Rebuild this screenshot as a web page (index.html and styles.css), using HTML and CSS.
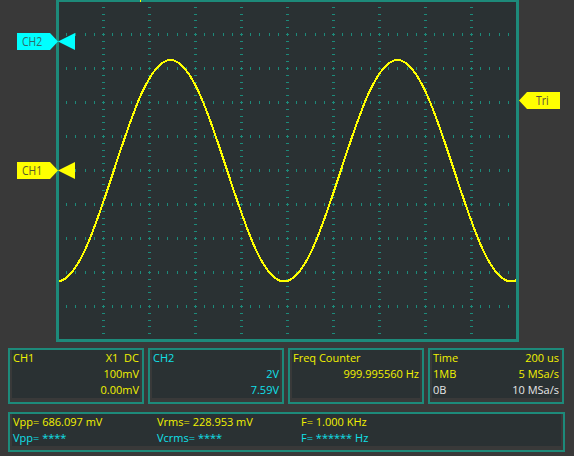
FILE: index.html
```html
<!DOCTYPE html>
<html>
<head>
<meta charset="utf-8">
<link rel="stylesheet" href="styles.css">
</head>
<body>
<div class="scope">
  <div class="frame">
    <svg class="grid" width="457" height="337" viewBox="0 0 457 337">
      <g class="vt">
        <line x1="44.5" y1="-2" x2="44.5" y2="340"/>
        <line x1="90.5" y1="-2" x2="90.5" y2="340"/>
        <line x1="136.5" y1="-2" x2="136.5" y2="340"/>
        <line x1="182.5" y1="-2" x2="182.5" y2="340"/>
        <line x1="228.5" y1="-2" x2="228.5" y2="340"/>
        <line x1="274.5" y1="-2" x2="274.5" y2="340"/>
        <line x1="320.5" y1="-2" x2="320.5" y2="340"/>
        <line x1="366.5" y1="-2" x2="366.5" y2="340"/>
        <line x1="412.5" y1="-2" x2="412.5" y2="340"/>
      </g>
      <g class="ht">
        <line x1="-2" y1="32.5" x2="460" y2="32.5"/>
        <line x1="-2" y1="66.5" x2="460" y2="66.5"/>
        <line x1="-2" y1="100.5" x2="460" y2="100.5"/>
        <line x1="-2" y1="134.5" x2="460" y2="134.5"/>
        <line x1="-2" y1="168.5" x2="460" y2="168.5"/>
        <line x1="-2" y1="202.5" x2="460" y2="202.5"/>
        <line x1="-2" y1="236.5" x2="460" y2="236.5"/>
        <line x1="-2" y1="270.5" x2="460" y2="270.5"/>
        <line x1="-2" y1="304.5" x2="460" y2="304.5"/>
      </g>
      <path class="wave" d="M -2 279.5 C 18.615 279.5, 36.242 225.486, 54.75 168.75 C 73.258 112.014, 90.885 58, 111.5 58 C 132.115 58, 149.742 112.014, 168.25 168.75 C 186.758 225.486, 204.385 279.5, 225 279.5 C 245.615 279.5, 263.242 225.486, 281.75 168.75 C 300.258 112.014, 317.885 58, 338.5 58 C 359.115 58, 376.742 112.014, 395.25 168.75 C 413.758 225.486, 431.385 279.5, 452 279.5 C 472.615 279.5, 490.242 225.486, 508.75 168.75"/>
    </svg>
  </div>
  <div class="trig-pos"></div>
  <div class="marker m-ch2"><span class="tag"><span class="txt">CH2</span></span><span class="arrow"></span></div>
  <div class="marker m-ch1"><span class="tag"><span class="txt">CH1</span></span><span class="arrow"></span></div>
  <div class="marker m-tri"><span class="tag"><span class="txt">Tri</span></span></div>
</div>

<div class="panels">
  <div class="panel">
    <div class="inner">
      <div class="lines y">
        <div class="line"><span>CH1</span><span class="pre">X1  DC</span></div>
        <div class="line"><span></span><span>100mV</span></div>
        <div class="line"><span></span><span>0.00mV</span></div>
      </div>
    </div>
  </div>
  <div class="panel">
    <div class="inner">
      <div class="lines c">
        <div class="line"><span>CH2</span><span></span></div>
        <div class="line"><span></span><span>2V</span></div>
        <div class="line"><span></span><span>7.59V</span></div>
      </div>
    </div>
  </div>
  <div class="panel">
    <div class="inner">
      <div class="lines y">
        <div class="line"><span>Freq Counter</span><span></span></div>
        <div class="line"><span></span><span>999.995560 Hz</span></div>
      </div>
    </div>
  </div>
  <div class="panel">
    <div class="inner">
      <div class="lines y">
        <div class="line"><span>Time</span><span>200 us</span></div>
        <div class="line"><span>1MB</span><span>5 MSa/s</span></div>
        <div class="line w"><span>0B</span><span>10 MSa/s</span></div>
      </div>
    </div>
  </div>
</div>

<div class="meas">
  <div class="inner">
    <div class="mgrid">
      <span class="y">Vpp= 686.097 mV</span>
      <span class="y">Vrms= 228.953 mV</span>
      <span class="y">F= 1.000 KHz</span>
      <span class="c">Vpp= ****</span>
      <span class="c">Vcrms= ****</span>
      <span class="c">F= ****** Hz</span>
    </div>
  </div>
</div>
</body>
</html>
```

FILE: styles.css
```css
html, body {
  margin: 0;
  padding: 0;
  background: #393939;
  width: 574px;
  height: 456px;
  overflow: hidden;
  font-family: "Open Sans", "Noto Sans", sans-serif;
  font-size: 11px;
}

.scope {
  position: relative;
  height: 342px;
}

.frame {
  margin-left: 56px;
  width: 457px;
  height: 337px;
  border: 3px solid #1d8a7a;
  border-top-width: 2px;
  background: #2a3133;
}

.grid {
  display: block;
}

.vt line {
  stroke: #1d8a7a;
  stroke-width: 3;
  stroke-dasharray: 1 5.8;
  shape-rendering: crispEdges;
}

.ht line {
  stroke: #1d8a7a;
  stroke-width: 3;
  stroke-dasharray: 1 8.2;
  shape-rendering: crispEdges;
}

.wave {
  fill: none;
  stroke: #ffff00;
  stroke-width: 2;
  shape-rendering: crispEdges;
}

.trig-pos {
  position: absolute;
  left: 140px;
  top: 0;
  width: 1px;
  height: 2px;
  background: #ffff00;
}

.marker {
  position: absolute;
  display: flex;
  height: 17px;
}

.marker .tag {
  display: block;
  height: 17px;
  line-height: 17px;
  font-size: 13px;
  box-sizing: border-box;
  overflow: hidden;
  white-space: nowrap;
}

.marker .txt {
  display: inline-block;
  transform: scaleX(0.8);
  transform-origin: left center;
}

.marker .arrow {
  display: block;
  width: 17px;
  height: 17px;
  clip-path: polygon(0 50%, 100% 0, 100% 100%);
}

.m-ch2, .m-ch1 {
  left: 17px;
}

.m-ch2 { top: 33px; }
.m-ch1 { top: 162px; }

.m-ch2 .tag, .m-ch1 .tag {
  width: 41px;
  padding-left: 5px;
  clip-path: polygon(0 0, 33px 0, 41px 50%, 33px 100%, 0 100%);
}

.m-ch2 .tag, .m-ch2 .arrow {
  background: #00ffff;
}
.m-ch2 .tag { color: #2f6a6a; }

.m-ch1 .tag, .m-ch1 .arrow {
  background: #ffff00;
}
.m-ch1 .tag { color: #5a5a2a; }

.m-tri {
  left: 519px;
  top: 92px;
}

.m-tri .tag {
  width: 41px;
  padding-left: 17px;
  background: #ffff00;
  color: #5a5040;
  clip-path: polygon(0 50%, 8px 0, 100% 0, 100% 100%, 8px 100%);
}

.panels {
  display: flex;
  gap: 4px;
  margin: 6px 0 0 8px;
}

.panel {
  width: 136px;
  height: 56px;
  box-sizing: border-box;
  border: 2px solid #1d8a7a;
  padding: 2px;
}

.inner {
  background: #2a3133;
  height: 100%;
  padding: 0 1px;
  box-sizing: border-box;
  overflow: visible;
}

.lines {
  margin-top: -2px;
}

.line {
  display: flex;
  justify-content: space-between;
  height: 16px;
  line-height: 16px;
  white-space: nowrap;
}

.pre {
  white-space: pre;
}

.y { color: #f2f200; }
.c { color: #10e0ea; }
.line.w { color: #e6e6e6; }

.meas {
  margin: 8px 0 0 8px;
  width: 557px;
  height: 40px;
  box-sizing: border-box;
  border: 2px solid #1d8a7a;
  padding: 2px;
}

.mgrid {
  display: grid;
  grid-template-columns: 144px 144px 144px;
  grid-auto-rows: 16px;
  line-height: 16px;
  margin-top: -2px;
  white-space: nowrap;
}
```
